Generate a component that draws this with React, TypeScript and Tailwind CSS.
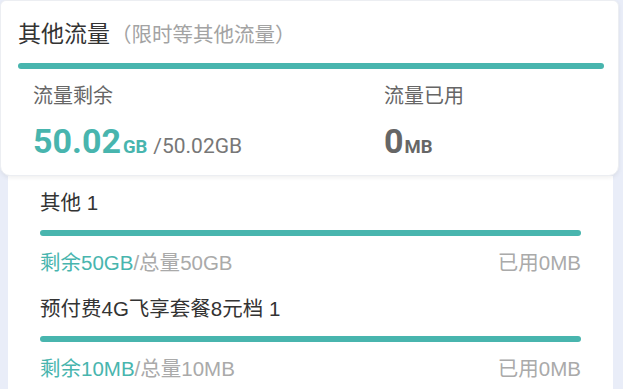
const TEAL = "text-[#48b5ae]";

type Pkg = {
  name: string;
  left: string;
  total: string;
  used: string;
};

const PACKAGES: Pkg[] = [
  { name: "其他 1", left: "50GB", total: "50GB", used: "0MB" },
  { name: "预付费4G飞享套餐8元档 1", left: "10MB", total: "10MB", used: "0MB" },
];

function Bar() {
  return <div className="h-[6px] w-full rounded-full bg-[#48b5ae]" />;
}

export default function App() {
  return (
    <div
      className="flex h-[389px] w-[623px] flex-col overflow-hidden bg-[#e9edf8]"
      style={{ fontFamily: 'Roboto, "Noto Sans CJK SC", sans-serif' }}
    >
      {/* summary card */}
      <div className="relative z-10 w-[619px] shrink-0 rounded-b-[10px] rounded-t-[6px] border border-[#eceef2] bg-white px-[17px] pb-[8px] pt-[20px] shadow-[0_2px_4px_rgba(0,0,0,0.06)]">
        <div className="flex items-center leading-[28px]">
          <span className="text-[23px] text-[#333]">其他流量</span>
          <span className="ml-[1px] text-[20.5px] text-[#a3a3a3]">（限时等其他流量）</span>
        </div>
        <div className="mt-[14px] w-[586px]">
          <Bar />
        </div>
        <div className="mt-[14px] grid grid-cols-[351px_1fr] pl-[15px]">
          <div>
            <div className="text-[20px] leading-[26px] text-[#666]">流量剩余</div>
            <div className="mt-[12px] flex items-baseline leading-[40px]">
              <span className={`text-[34px] font-bold ${TEAL}`}>50.02</span>
              <span className={`ml-[2px] text-[18.5px] font-bold ${TEAL}`}>GB</span>
              <span className="ml-[6px] text-[21px] text-[#777]">/50.02GB</span>
            </div>
          </div>
          <div>
            <div className="text-[20px] leading-[26px] text-[#666]">流量已用</div>
            <div className="mt-[12px] flex items-baseline leading-[40px]">
              <span className="text-[34px] font-bold text-[#666]">0</span>
              <span className="ml-[1px] text-[18.5px] font-bold text-[#666]">MB</span>
            </div>
          </div>
        </div>
      </div>

      {/* package list */}
      <div
        className="ml-[8px] mr-[10px] flex-1 bg-white px-[32px] pt-[14px]"
        style={{ fontFamily: '"Liberation Sans", "Noto Sans CJK SC", sans-serif' }}
      >
        {PACKAGES.map((p) => (
          <div key={p.name} className="mb-[20px]">
            <div className="text-[20.5px] leading-[26px] text-[#333]">{p.name}</div>
            <div className="mt-[14px]">
              <Bar />
            </div>
            <div className="mt-[14px] flex items-center justify-between text-[20.5px] leading-[26px]">
              <span>
                <span className={TEAL}>剩余{p.left}</span>
                <span className="text-[#aaa]">/总量{p.total}</span>
              </span>
              <span className="text-[#aaa]">已用{p.used}</span>
            </div>
          </div>
        ))}
      </div>
    </div>
  );
}
